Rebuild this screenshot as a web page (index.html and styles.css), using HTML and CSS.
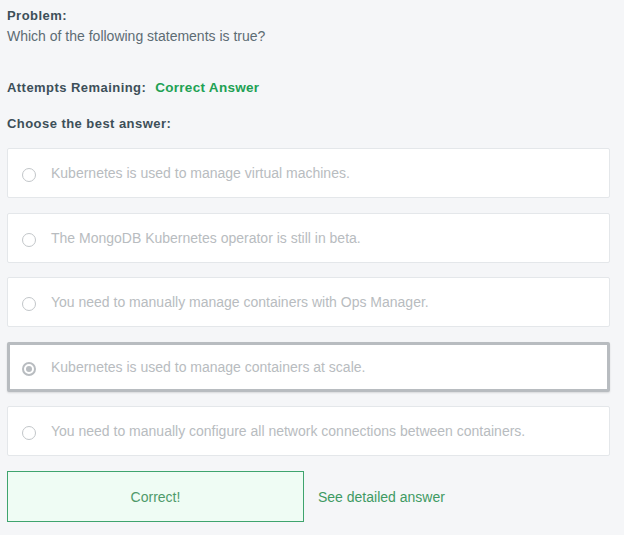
FILE: index.html
```html
<!DOCTYPE html>
<html>
<head>
<meta charset="utf-8">
<link rel="stylesheet" href="styles.css">
</head>
<body>
<div class="page">
  <div class="problem">
    <div class="label">Problem:</div>
    <div class="question">Which of the following statements is true?</div>
  </div>
  <div class="attempts"><span class="label">Attempts Remaining:</span> <span class="correct-answer">Correct Answer</span></div>
  <div class="label choose">Choose the best answer:</div>
  <div class="options">
    <div class="option"><span class="radio"></span><span class="text">Kubernetes is used to manage virtual machines.</span></div>
    <div class="option"><span class="radio"></span><span class="text">The MongoDB Kubernetes operator is still in beta.</span></div>
    <div class="option"><span class="radio"></span><span class="text">You need to manually manage containers with Ops Manager.</span></div>
    <div class="option selected"><span class="radio"></span><span class="text">Kubernetes is used to manage containers at scale.</span></div>
    <div class="option"><span class="radio"></span><span class="text">You need to manually configure all network connections between containers.</span></div>
  </div>
  <div class="actions">
    <div class="result">Correct!</div>
    <a class="detail">See detailed answer</a>
  </div>
</div>
</body>
</html>
```
FILE: styles.css
```css
html, body {
  margin: 0;
  padding: 0;
  background: #f5f6f8;
}
body {
  font-family: "Liberation Sans", Arial, sans-serif;
  font-size: 14px;
  color: #3d4f58;
}
.page {
  padding: 8px 14px 0 7px;
}
.label {
  font-weight: bold;
  font-size: 13px;
  color: #3d4f58;
  letter-spacing: 0.45px;
}
.problem .label {
  line-height: 16px;
}
.question {
  color: #5d6c74;
  line-height: 24px;
}
.attempts {
  margin-top: 31px;
  line-height: 16px;
}
.correct-answer {
  color: #21a153;
  font-weight: bold;
  font-size: 13.5px;
  letter-spacing: 0.3px;
  margin-left: 5px;
}
.choose {
  margin-top: 20px;
  line-height: 16px;
}
.options {
  margin-top: 16px;
  display: flex;
  flex-direction: column;
  gap: 14.5px;
}
.option {
  height: 50px;
  box-sizing: border-box;
  background: #ffffff;
  border: 1px solid #e4e7ea;
  border-radius: 2px;
  display: flex;
  align-items: center;
  padding-left: 14px;
}
.option.selected {
  border: 3px solid #b8bcc0;
  padding-left: 12px;
  box-shadow: 0 1px 2px rgba(0,0,0,0.12);
}
.radio {
  width: 14px;
  height: 14px;
  margin-top: 4px;
  border: 1px solid #c2c6c9;
  border-radius: 50%;
  box-sizing: border-box;
  flex: none;
  position: relative;
  margin-right: 15px;
  background: #fff;
}
.option.selected .radio {
  border: 2px solid #b8bcc0;
}
.option.selected .radio::after {
  content: "";
  position: absolute;
  left: 2px;
  top: 2px;
  width: 6px;
  height: 6px;
  border-radius: 50%;
  background: #b8bcc0;
}
.text {
  color: #b8bcc0;
}
.actions {
  margin-top: 15px;
  display: flex;
  align-items: center;
}
.result {
  width: 297px;
  height: 51px;
  box-sizing: border-box;
  border: 1px solid #3fa46e;
  background: #effcf4;
  color: #4e9a6a;
  display: flex;
  align-items: center;
  justify-content: center;
}
.detail {
  margin-left: 14px;
  color: #3e9a63;
}
```
